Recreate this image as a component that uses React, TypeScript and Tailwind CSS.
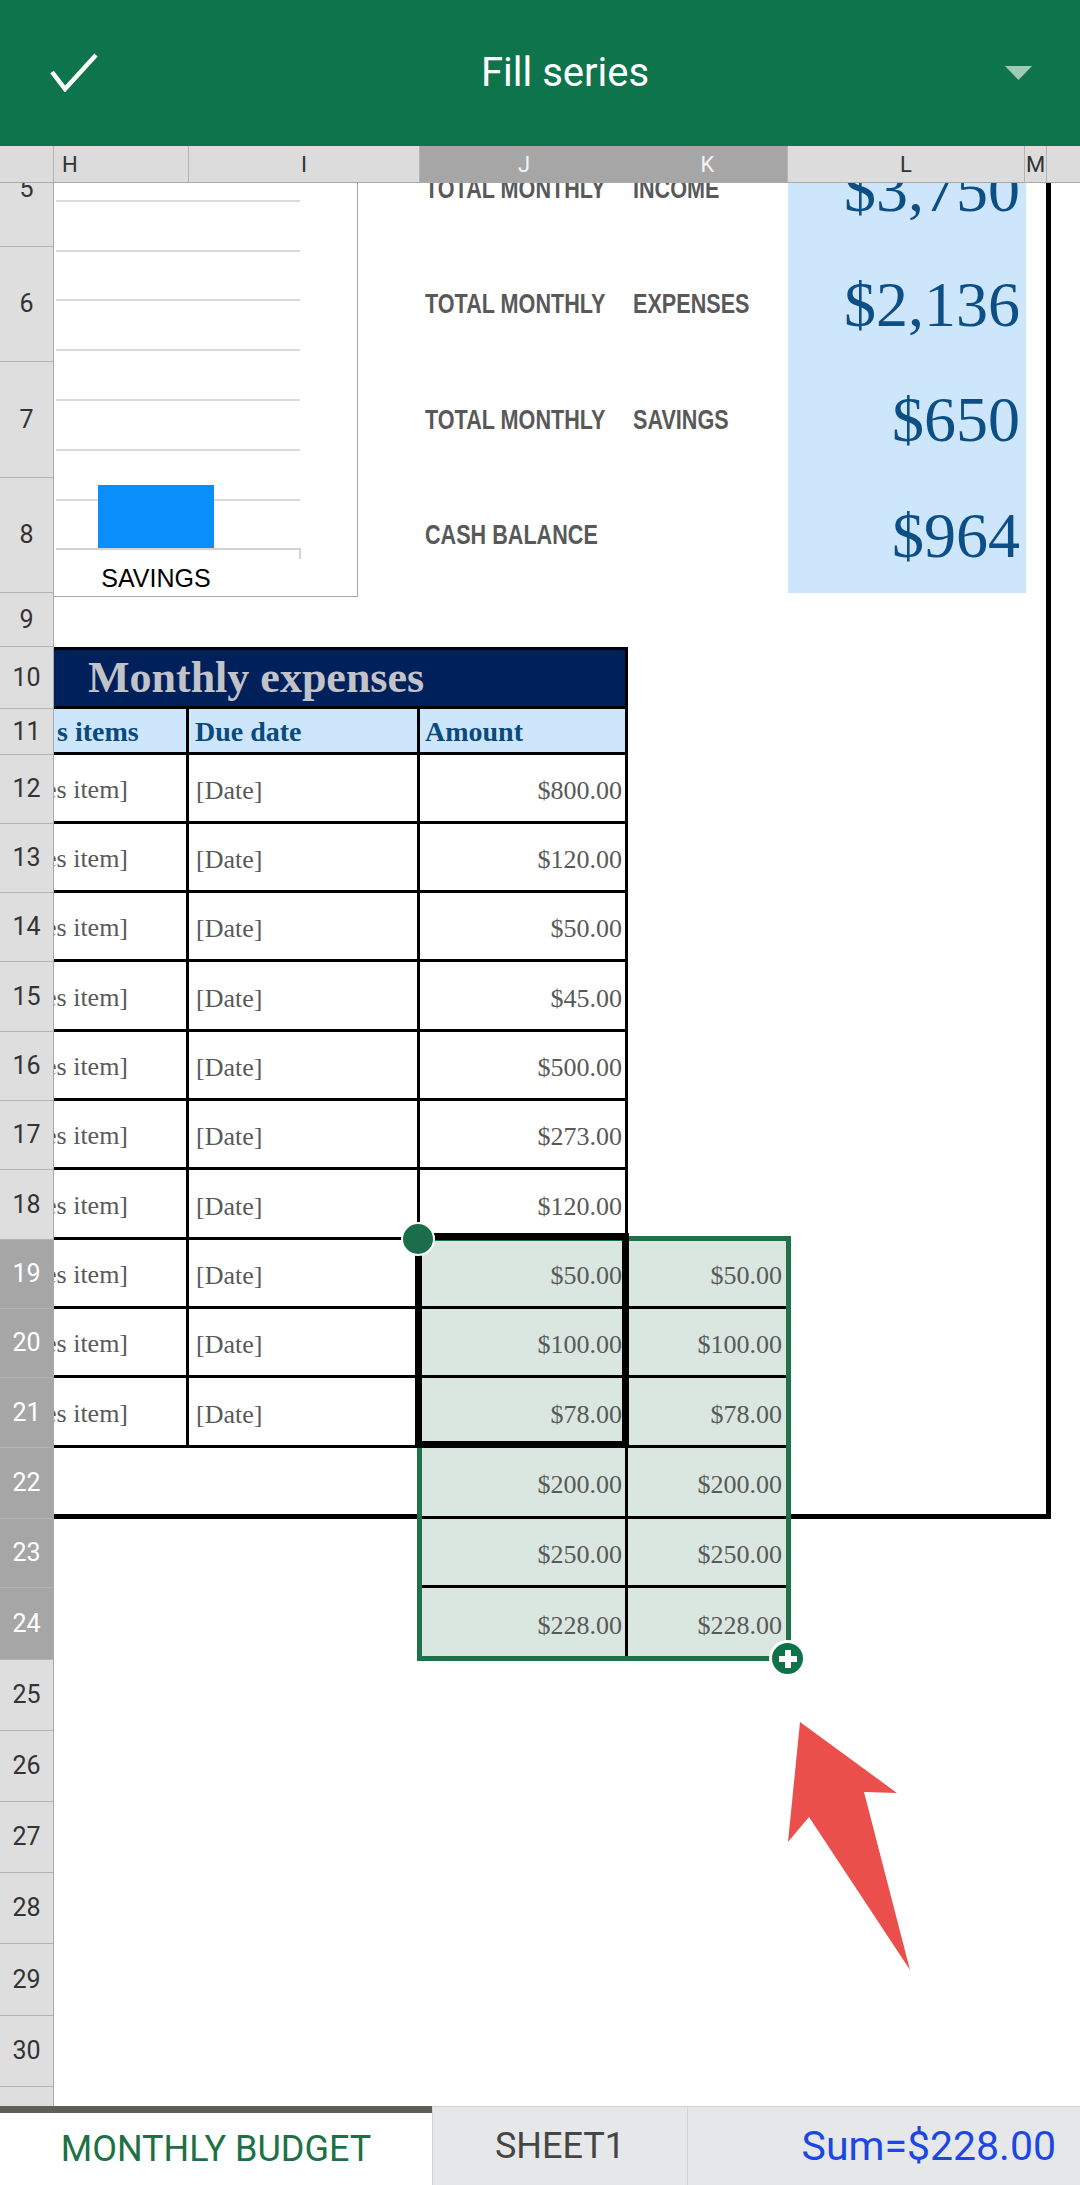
import React from "react"

const ui = "font-['Roboto','Liberation_Sans',sans-serif]"
const serif = "font-['Liberation_Serif','Times_New_Roman',serif]"
const label = "font-['Liberation_Sans',Arial,sans-serif] font-bold text-[27px] leading-none text-[#595959] whitespace-nowrap inline-block scale-x-[0.8] origin-left"

// cell widths for columns H..N (H is scrolled partly off the left edge)
const COL = ["w-[135px]", "w-[231px]", "w-[208px]", "w-[160px]", "w-[238px]", "w-[25px]", "w-[29px]"]

// row heights, rows 5..31 (row 5 starts under the column headers)
const RH: Record<number, string> = {
  5: "h-[115px]", 6: "h-[115px]", 7: "h-[116px]", 8: "h-[115px]", 9: "h-[54px]",
  10: "h-[62px]", 11: "h-[46px]", 12: "h-[69px]", 13: "h-[69px]", 14: "h-[69px]",
  15: "h-[70px]", 16: "h-[69px]", 17: "h-[69px]", 18: "h-[70px]", 19: "h-[69px]",
  20: "h-[69px]", 21: "h-[70px]", 22: "h-[71px]", 23: "h-[69px]", 24: "h-[72px]",
  25: "h-[71px]", 26: "h-[71px]", 27: "h-[71px]", 28: "h-[71px]", 29: "h-[72px]",
  30: "h-[71px]", 31: "h-[71px]",
}
const ROWS = Object.keys(RH).map(Number)
const FILL = "bg-[#d9e7e0]"

function C({ i, className = "", children }: { i: number; className?: string; children?: React.ReactNode }) {
  return <div className={`${COL[i]} shrink-0 h-full flex items-center ${className}`}>{children}</div>
}

function Val({ children }: { children: React.ReactNode }) {
  return <span className={`${serif} text-[26px] leading-none text-[#595959] whitespace-nowrap`}>{children}</span>
}

function SummaryRow({ n, a, b, value }: { n: number; a: string; b?: string; value: string }) {
  return (
    <div className={`flex ${RH[n]}`}>
      <C i={0} />
      <C i={1} />
      <C i={2} className="pl-[5px]">
        <span className={label}>{a}</span>
      </C>
      <C i={3} className="pl-[5px]">
        {b && <span className={label}>{b}</span>}
      </C>
      <C i={4} className="justify-end pr-[6px] bg-[#cde6fb]">
        <span className={`${serif} text-[64px] leading-none text-[#0c4e86]`}>{value}</span>
      </C>
      <C i={5} className="border-r-[5px] border-black" />
      <C i={6} />
    </div>
  )
}

function ItemRow({ n, amount, sel }: { n: number; amount: string; sel?: boolean }) {
  return (
    <div className={`flex ${RH[n]}`}>
      <C i={0} className="border-r-[3px] border-b-[3px] border-black overflow-hidden pt-[6px]">
        <span className="-ml-[9px]"><Val>es item]</Val></span>
      </C>
      <C i={1} className="border-r-[3px] border-b-[3px] border-black pl-[7px] pt-[6px]">
        <Val>[Date]</Val>
      </C>
      <C i={2} className={`border-r-[3px] border-b-[3px] border-black justify-end pr-[3px] pt-[6px] ${sel ? FILL : ""}`}>
        <Val>{amount}</Val>
      </C>
      <C i={3} className={sel ? `${FILL} border-b-[3px] border-black justify-end pr-[6px] pt-[6px]` : ""}>
        {sel && <Val>{amount}</Val>}
      </C>
      <C i={4} />
      <C i={5} className="border-r-[5px] border-black" />
      <C i={6} />
    </div>
  )
}

function FillRow({ n, amount, edge }: { n: number; amount: string; edge?: boolean }) {
  const b = edge ? "border-b-[5px] border-black" : ""
  return (
    <div className={`flex ${RH[n]}`}>
      <C i={0} className={b} />
      <C i={1} className={b} />
      <C i={2} className={`${FILL} border-r-[3px] border-b-[3px] border-black justify-end pr-[3px] pt-[6px]`}>
        <Val>{amount}</Val>
      </C>
      <C i={3} className={`${FILL} border-b-[3px] border-black justify-end pr-[6px] pt-[6px]`}>
        <Val>{amount}</Val>
      </C>
      <C i={4} className={b} />
      <C i={5} className={edge ? "border-r-[5px] border-b-[5px] border-black" : ""} />
      <C i={6} />
    </div>
  )
}

function EmptyRow({ n, boxed }: { n: number; boxed?: boolean }) {
  return (
    <div className={`flex ${RH[n]}`}>
      <C i={0} />
      <C i={1} />
      <C i={2} />
      <C i={3} />
      <C i={4} />
      <C i={5} className={boxed ? "border-r-[5px] border-black" : ""} />
      <C i={6} />
    </div>
  )
}

function ColumnHeaders() {
  const sep = "border-r border-[#b4b4b4] h-full flex items-center"
  return (
    <div className={`flex h-[37px] bg-[#dcdcdc] border-b border-[#a9a9a9] text-[22px] text-[#333] ${ui}`}>
      <div className={`w-[54px] ${sep}`} />
      <div className={`w-[135px] ${sep} pl-[8px]`}>H</div>
      <div className={`w-[231px] ${sep} justify-center`}>I</div>
      <div className="w-[208px] h-full flex items-center justify-center bg-[#a6a6a6] text-[#f4f4f4]">J</div>
      <div className="w-[160px] h-full flex items-center justify-center bg-[#a6a6a6] text-[#f4f4f4] border-r border-[#b4b4b4]">K</div>
      <div className={`w-[237px] ${sep} justify-center`}>L</div>
      <div className={`w-[22px] ${sep} justify-center`}>M</div>
      <div className="flex-1" />
    </div>
  )
}

function RowHeaders() {
  return (
    <div className={`w-[54px] shrink-0 bg-[#dedede] border-r border-[#a9a9a9] ${ui}`}>
      {ROWS.map((n) => {
        const hl = n >= 19 && n <= 24
        return (
          <div
            key={n}
            className={`${RH[n]} flex items-center justify-center border-b border-[#b4b4b4] text-[25px] ${
              hl ? "bg-[#a6a6a6] text-white" : "text-[#333]"
            }`}
          >
            {n}
          </div>
        )
      })}
    </div>
  )
}

function Chart() {
  const grid = [18, 68, 117, 167, 217, 267, 317]
  return (
    <div className="absolute left-[54px] top-[183px] w-[304px] h-[414px] bg-white border-r border-b border-[#a6a6a6]">
      <svg width="303" height="413" className="block">
        {grid.map((y) => (
          <line key={y} x1="2" x2="246" y1={y} y2={y} stroke="#dadada" strokeWidth="2" />
        ))}
        <rect x="44" y="302" width="116" height="64" fill="#0a8ffa" />
        <polyline points="2,366 246,366 246,376" fill="none" stroke="#d3d3d3" strokeWidth="2" />
      </svg>
      <div className="absolute left-[44px] w-[116px] top-[383px] flex justify-center">
        <span className="font-['Liberation_Sans',Arial,sans-serif] text-[25px] leading-none text-black">SAVINGS</span>
      </div>
    </div>
  )
}

export default function App() {
  return (
    <div className={`relative w-[1080px] h-[2185px] overflow-hidden bg-white ${ui}`}>
      {/* action bar */}
      <div className="h-[146px] bg-[#0e744c] flex items-center">
        <svg width="52" height="40" className="ml-[48px] mt-[-2px]">
          <polyline points="4,20 17,37 48,3" fill="none" stroke="white" strokeWidth="4.5" />
        </svg>
        <span className="ml-[381px] text-[40px] leading-none text-white">Fill series</span>
        <svg width="27" height="14" className="ml-auto mr-[48px]">
          <polygon points="0,0 27,0 13.5,14" fill="#a2c8b7" />
        </svg>
      </div>

      <ColumnHeaders />

      {/* grid, scrolled so that row 5 is partly hidden */}
      <div className="h-[1923px] overflow-hidden">
        <div className="-mt-[51px] flex">
          <RowHeaders />
          <div className="flex-1 flex flex-col">
            <SummaryRow n={5} a="TOTAL MONTHLY" b="INCOME" value="$3,750" />
            <SummaryRow n={6} a="TOTAL MONTHLY" b="EXPENSES" value="$2,136" />
            <SummaryRow n={7} a="TOTAL MONTHLY" b="SAVINGS" value="$650" />
            <SummaryRow n={8} a="CASH BALANCE" value="$964" />
            <EmptyRow n={9} boxed />

            <div className={`flex ${RH[10]}`}>
              <div className="w-[574px] shrink-0 h-full flex items-center bg-[#00205b] border-t-[3px] border-b-[3px] border-r-[3px] border-black pl-[34px]">
                <span className={`${serif} font-bold text-[44px] leading-none text-[#c2c3c9] whitespace-nowrap`}>Monthly expenses</span>
              </div>
              <C i={3} />
              <C i={4} />
              <C i={5} className="border-r-[5px] border-black" />
              <C i={6} />
            </div>

            <div className={`flex ${RH[11]}`}>
              {[
                { i: 0, t: "s items", p: "pl-[3px] overflow-hidden" },
                { i: 1, t: "Due date", p: "pl-[6px]" },
                { i: 2, t: "Amount", p: "pl-[5px]" },
              ].map((h) => (
                <C key={h.i} i={h.i} className={`bg-[#cde6fb] border-r-[3px] border-b-[3px] border-black pt-[3px] ${h.p}`}>
                  <span className={`${serif} font-bold text-[28px] leading-none text-[#0b4a7d] whitespace-nowrap`}>{h.t}</span>
                </C>
              ))}
              <C i={3} />
              <C i={4} />
              <C i={5} className="border-r-[5px] border-black" />
              <C i={6} />
            </div>

            <ItemRow n={12} amount="$800.00" />
            <ItemRow n={13} amount="$120.00" />
            <ItemRow n={14} amount="$50.00" />
            <ItemRow n={15} amount="$45.00" />
            <ItemRow n={16} amount="$500.00" />
            <ItemRow n={17} amount="$273.00" />
            <ItemRow n={18} amount="$120.00" />
            <ItemRow n={19} amount="$50.00" sel />
            <ItemRow n={20} amount="$100.00" sel />
            <ItemRow n={21} amount="$78.00" sel />
            <FillRow n={22} amount="$200.00" edge />
            <FillRow n={23} amount="$250.00" />
            <FillRow n={24} amount="$228.00" />
            {[25, 26, 27, 28, 29, 30, 31].map((n) => (
              <EmptyRow key={n} n={n} />
            ))}
          </div>
        </div>
      </div>

      {/* sheet tabs + status */}
      <div className="flex h-[79px] leading-none">
        <div className="w-[432px] shrink-0 bg-white border-t-[7px] border-[#5f5f5a] flex items-center justify-center text-[36px] text-[#1e7145]">
          MONTHLY BUDGET
        </div>
        <div className="w-[255px] shrink-0 bg-[#e6e7e8] border-t border-l border-[#d3d3d3] flex items-center justify-center text-[36px] text-[#454545]">
          SHEET1
        </div>
        <div className="flex-1 bg-[#e6e7e8] border-t border-l border-[#d3d3d3] flex items-center justify-end pr-[24px] text-[41px] text-[#1c47e3]">
          Sum=$228.00
        </div>
      </div>

      {/* floating chart */}
      <Chart />

      {/* fill range and source selection */}
      <div className="absolute left-[417px] top-[1236px] w-[374px] h-[425px] border-[5px] border-[#1f7247]" />
      <div className="absolute left-[415px] top-[1233px] w-[214px] h-[215px] border-[7px] border-black" />
      <div className="absolute left-[401px] top-[1222px] w-[34px] h-[34px] rounded-full bg-[#1a6e4a] border-2 border-white" />
      <div className="absolute left-[769px] top-[1640px] w-[37px] h-[37px] rounded-full bg-[#107248] border-[3px] border-white flex items-center justify-center">
        <svg width="18" height="18">
          <rect x="6" y="0" width="6" height="18" fill="white" />
          <rect x="0" y="6" width="18" height="6" fill="white" />
        </svg>
      </div>

      {/* red pointer arrow */}
      <svg className="absolute left-[780px] top-[1715px]" width="140" height="265">
        <polygon points="20,7 117,78 84,77 130,255 29,102 8,127" fill="#ea4f4b" />
      </svg>
    </div>
  )
}
